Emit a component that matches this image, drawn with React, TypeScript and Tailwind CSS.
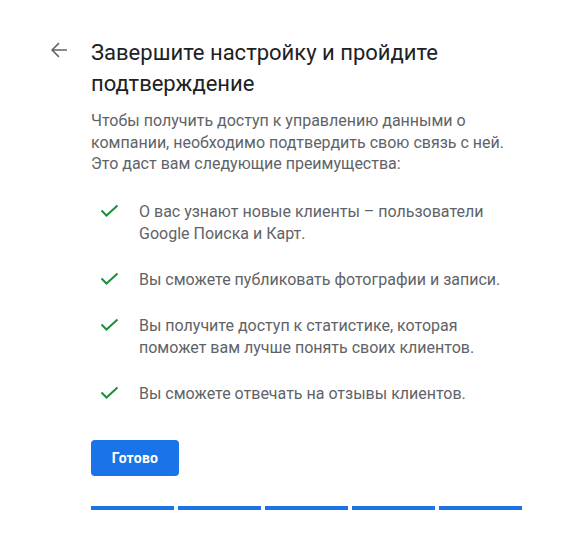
const BENEFITS = [
  'О вас узнают новые клиенты – пользователи Google Поиска и Карт.',
  'Вы сможете публиковать фотографии и записи.',
  'Вы получите доступ к статистике, которая поможет вам лучше понять своих клиентов.',
  'Вы сможете отвечать на отзывы клиентов.',
];

function BackArrow() {
  return (
    <svg width="24" height="24" viewBox="0 0 24 24" fill="currentColor">
      <path d="M20 11.25H6.87l5.6-5.6L11.4 4.6 4 12l7.4 7.4 1.07-1.05-5.6-5.6H20v-1.5z" />
    </svg>
  );
}

function Tick() {
  return (
    <svg width="20" height="14" viewBox="0 0 20 14" fill="none" stroke="currentColor" strokeWidth="2">
      <polyline points="2.5,6.5 7.5,11.5 18.5,1.5" />
    </svg>
  );
}

export default function App() {
  return (
    <div className="min-h-[560px] bg-white font-['Roboto',sans-serif]">
      <div className="flex gap-5 pl-[47px] pt-[37px]">
        {/* Back */}
        <button className="mt-px h-6 w-6 shrink-0 text-[#5f6368]">
          <BackArrow />
        </button>

        <div className="w-[431px]">
          <h1 className="text-[22px] leading-[31px] text-[#202124]">
            Завершите настройку и пройдите подтверждение
          </h1>
          <p className="mt-[11px] text-base leading-[21.5px] text-[#5f6368]">
            Чтобы получить доступ к управлению данными о компании, необходимо подтвердить свою связь с ней. Это даст вам следующие преимущества:
          </p>

          <ul className="mt-[26px] space-y-6">
            {BENEFITS.map(text => (
              <li key={text} className="flex gap-5 pl-2">
                <span className="mt-[3px] shrink-0 text-[#1e8e3e]">
                  <Tick />
                </span>
                <span className="text-base leading-[22px] text-[#5f6368]">{text}</span>
              </li>
            ))}
          </ul>

          <button className="mt-[35px] h-9 w-[88px] rounded bg-[#1a73e8] text-sm font-bold tracking-[0.25px] text-white">
            Готово
          </button>

          {/* Progress */}
          <div className="mt-[30px] flex gap-1">
            {[0, 1, 2, 3, 4].map(i => (
              <div key={i} className="h-1 flex-1 bg-[#1a73e8]" />
            ))}
          </div>
        </div>
      </div>
    </div>
  );
}
